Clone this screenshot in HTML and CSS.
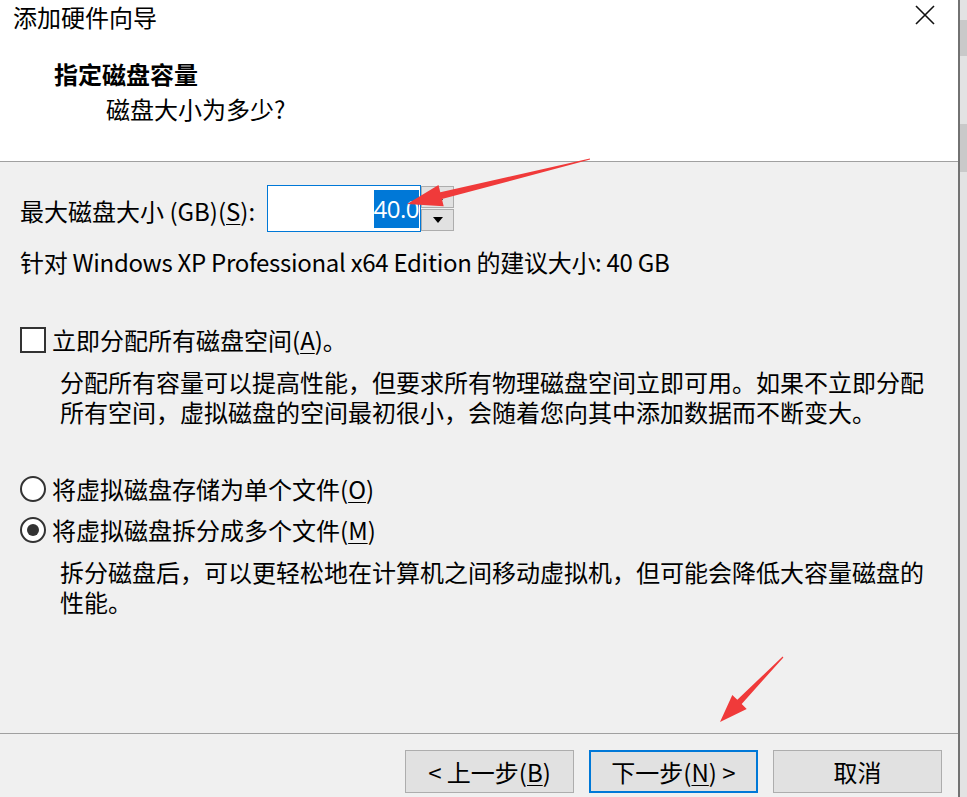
FILE: index.html
```html
<!DOCTYPE html>
<html lang="zh-CN">
<head>
    <meta charset="UTF-8">
    <title>添加硬件向导</title>
    <link rel="stylesheet" href="styles.css">
</head>
<body>
    <div class="dialog">
        <div class="header">
            <div class="titlebar">
                <span class="title">添加硬件向导</span>
                <svg class="close" width="20" height="20" viewBox="0 0 20 20">
                    <path d="M1 1 L19 19 M19 1 L1 19" stroke="#111" stroke-width="1.6" fill="none"/>
                </svg>
            </div>
            <div class="heading">指定磁盘容量</div>
            <div class="subheading">磁盘大小为多少?</div>
        </div>

        <div class="content">
            <div class="field-row">
                <label class="field-label">最大磁盘大小 (GB)(<u>S</u>):</label>
                <div class="spin-input">
                    <div class="spin-text"><span class="selected">40.0</span></div>
                    <div class="spin-buttons">
                        <div class="spin-btn">
                            <svg width="10" height="6" viewBox="0 0 10 6"><polygon points="0,6 10,6 5,0" fill="#000"/></svg>
                        </div>
                        <div class="spin-btn">
                            <svg width="10" height="6" viewBox="0 0 10 6"><polygon points="0,0 10,0 5,6" fill="#000"/></svg>
                        </div>
                    </div>
                </div>
            </div>
            <div class="hint">针对 Windows XP Professional x64 Edition 的建议大小: 40 GB</div>

            <div class="option option-first">
                <span class="checkbox"></span>
                <span>立即分配所有磁盘空间(<u>A</u>)。</span>
            </div>
            <div class="desc">分配所有容量可以提高性能，但要求所有物理磁盘空间立即可用。如果不立即分配所有空间，虚拟磁盘的空间最初很小，会随着您向其中添加数据而不断变大。</div>

            <div class="option option-radio">
                <span class="radio"></span>
                <span>将虚拟磁盘存储为单个文件(<u>O</u>)</span>
            </div>
            <div class="option option-radio2">
                <span class="radio checked"></span>
                <span>将虚拟磁盘拆分成多个文件(<u>M</u>)</span>
            </div>
            <div class="desc">拆分磁盘后，可以更轻松地在计算机之间移动虚拟机，但可能会降低大容量磁盘的性能。</div>
        </div>

        <div class="footer">
            <button class="btn">&lt; 上一步(<u>B</u>)</button>
            <button class="btn default">下一步(<u>N</u>) &gt;</button>
            <button class="btn">取消</button>
        </div>
    </div>
    <div class="edge">
        <div class="edge-block first"></div>
        <div class="edge-block second"></div>
    </div>

    <!-- annotation arrows drawn over the screenshot -->
    <svg class="marks" width="967" height="797" viewBox="0 0 967 797">
        <polygon fill="#f03a3a" points="590.1,159.6 441.9,199.0 443.7,206.3 407,204 438.5,184.9 440.3,192.2 589.9,158.4"/>
        <polygon fill="#f03a3a" points="783.4,657.4 741.7,704.0 746.7,708.9 720,722 732.3,694.9 737.3,699.8 782.6,656.6"/>
    </svg>
</body>
</html>
```

FILE: styles.css
```css
body {
    margin: 0;
    width: 967px;
    height: 797px;
    overflow: hidden;
    display: flex;
    position: relative;
    font-family: "Noto Sans CJK SC", "Microsoft YaHei", sans-serif;
    font-size: 24px;
    color: #000;
    background: #f0f0f0;
}
u {
    text-decoration-thickness: 1px;
    text-underline-offset: 3px;
}
.dialog {
    width: 958px;
    height: 797px;
    border-right: 2px solid #727272;
    display: flex;
    flex-direction: column;
    background: #f0f0f0;
}
.header {
    background: #fff;
    height: 162px;
    box-sizing: border-box;
    border-bottom: 1px solid #a0a0a0;
}
.titlebar {
    display: flex;
    justify-content: space-between;
    align-items: center;
    height: 34px;
    padding: 0 23px 0 13px;
}
.title {
    line-height: 34px;
    margin-top: -1px;
}
.close {
    margin-top: -4px;
}
.heading {
    margin-top: 25px;
    padding-left: 54px;
    line-height: 30px;
    font-weight: bold;
}
.subheading {
    margin-top: 5px;
    padding-left: 106px;
    line-height: 30px;
}
.content {
    flex: 1;
    padding: 0 20px;
}
.field-row {
    display: flex;
    align-items: center;
    margin-top: 23px;
}
.field-label {
    width: 247px;
    line-height: 30px;
    padding-top: 4px;
}
.spin-input {
    display: flex;
    align-items: flex-start;
}
.spin-text {
    width: 154px;
    height: 47px;
    box-sizing: border-box;
    border: 1px solid #0078d7;
    background: #fff;
    display: flex;
    justify-content: flex-end;
    align-items: center;
    padding-right: 1px;
}
.selected {
    background: #0078d7;
    color: #fff;
    line-height: 38px;
    font-family: "Open Sans", "Noto Sans", sans-serif;
    letter-spacing: -0.5px;
}
.spin-buttons {
    display: flex;
    flex-direction: column;
    gap: 1px;
    padding-top: 1px;
}
.spin-btn {
    width: 33px;
    height: 22px;
    box-sizing: border-box;
    border: 1px solid #adadad;
    background: #e1e1e1;
    display: flex;
    align-items: center;
    justify-content: center;
}
.hint {
    margin-top: 15px;
    line-height: 30px;
    letter-spacing: -0.3px;
}
.option {
    display: flex;
    align-items: center;
    gap: 6px;
    line-height: 30px;
}
.option-first {
    margin-top: 48px;
}
.option-radio {
    margin-top: 47px;
}
.option-radio2 {
    margin-top: 11px;
}
.checkbox {
    width: 26px;
    height: 26px;
    box-sizing: border-box;
    border: 2px solid #333;
    background: #fff;
}
.radio {
    width: 26px;
    height: 26px;
    box-sizing: border-box;
    border: 2px solid #333;
    border-radius: 50%;
    background: #fff;
    display: flex;
    align-items: center;
    justify-content: center;
}
.radio.checked::after {
    content: "";
    width: 12px;
    height: 12px;
    border-radius: 50%;
    background: #333;
}
.desc {
    margin-top: 12px;
    padding-left: 40px;
    max-width: 870px;
    line-height: 30px;
}
.footer {
    height: 64px;
    box-sizing: border-box;
    border-top: 1px solid #a0a0a0;
    display: flex;
    justify-content: flex-end;
    align-items: flex-start;
    gap: 15px;
    padding: 16px 16px 0 0;
}
.btn {
    width: 169px;
    height: 43px;
    border: 1px solid #adadad;
    background: #e1e1e1;
    font-family: inherit;
    font-size: 24px;
    color: #000;
    padding: 0;
    line-height: 30px;
}
.btn.default {
    border: 2px solid #0078d7;
}
.edge {
    flex: 1;
    background: #e3e3e3;
    position: relative;
}
.edge-block {
    height: 36px;
    margin-top: 20px;
    background: #c9c9c9;
}
.edge-block.second {
    height: 48px;
    margin-top: 68px;
}
.marks {
    position: absolute;
    top: 0;
    left: 0;
    pointer-events: none;
}
```
